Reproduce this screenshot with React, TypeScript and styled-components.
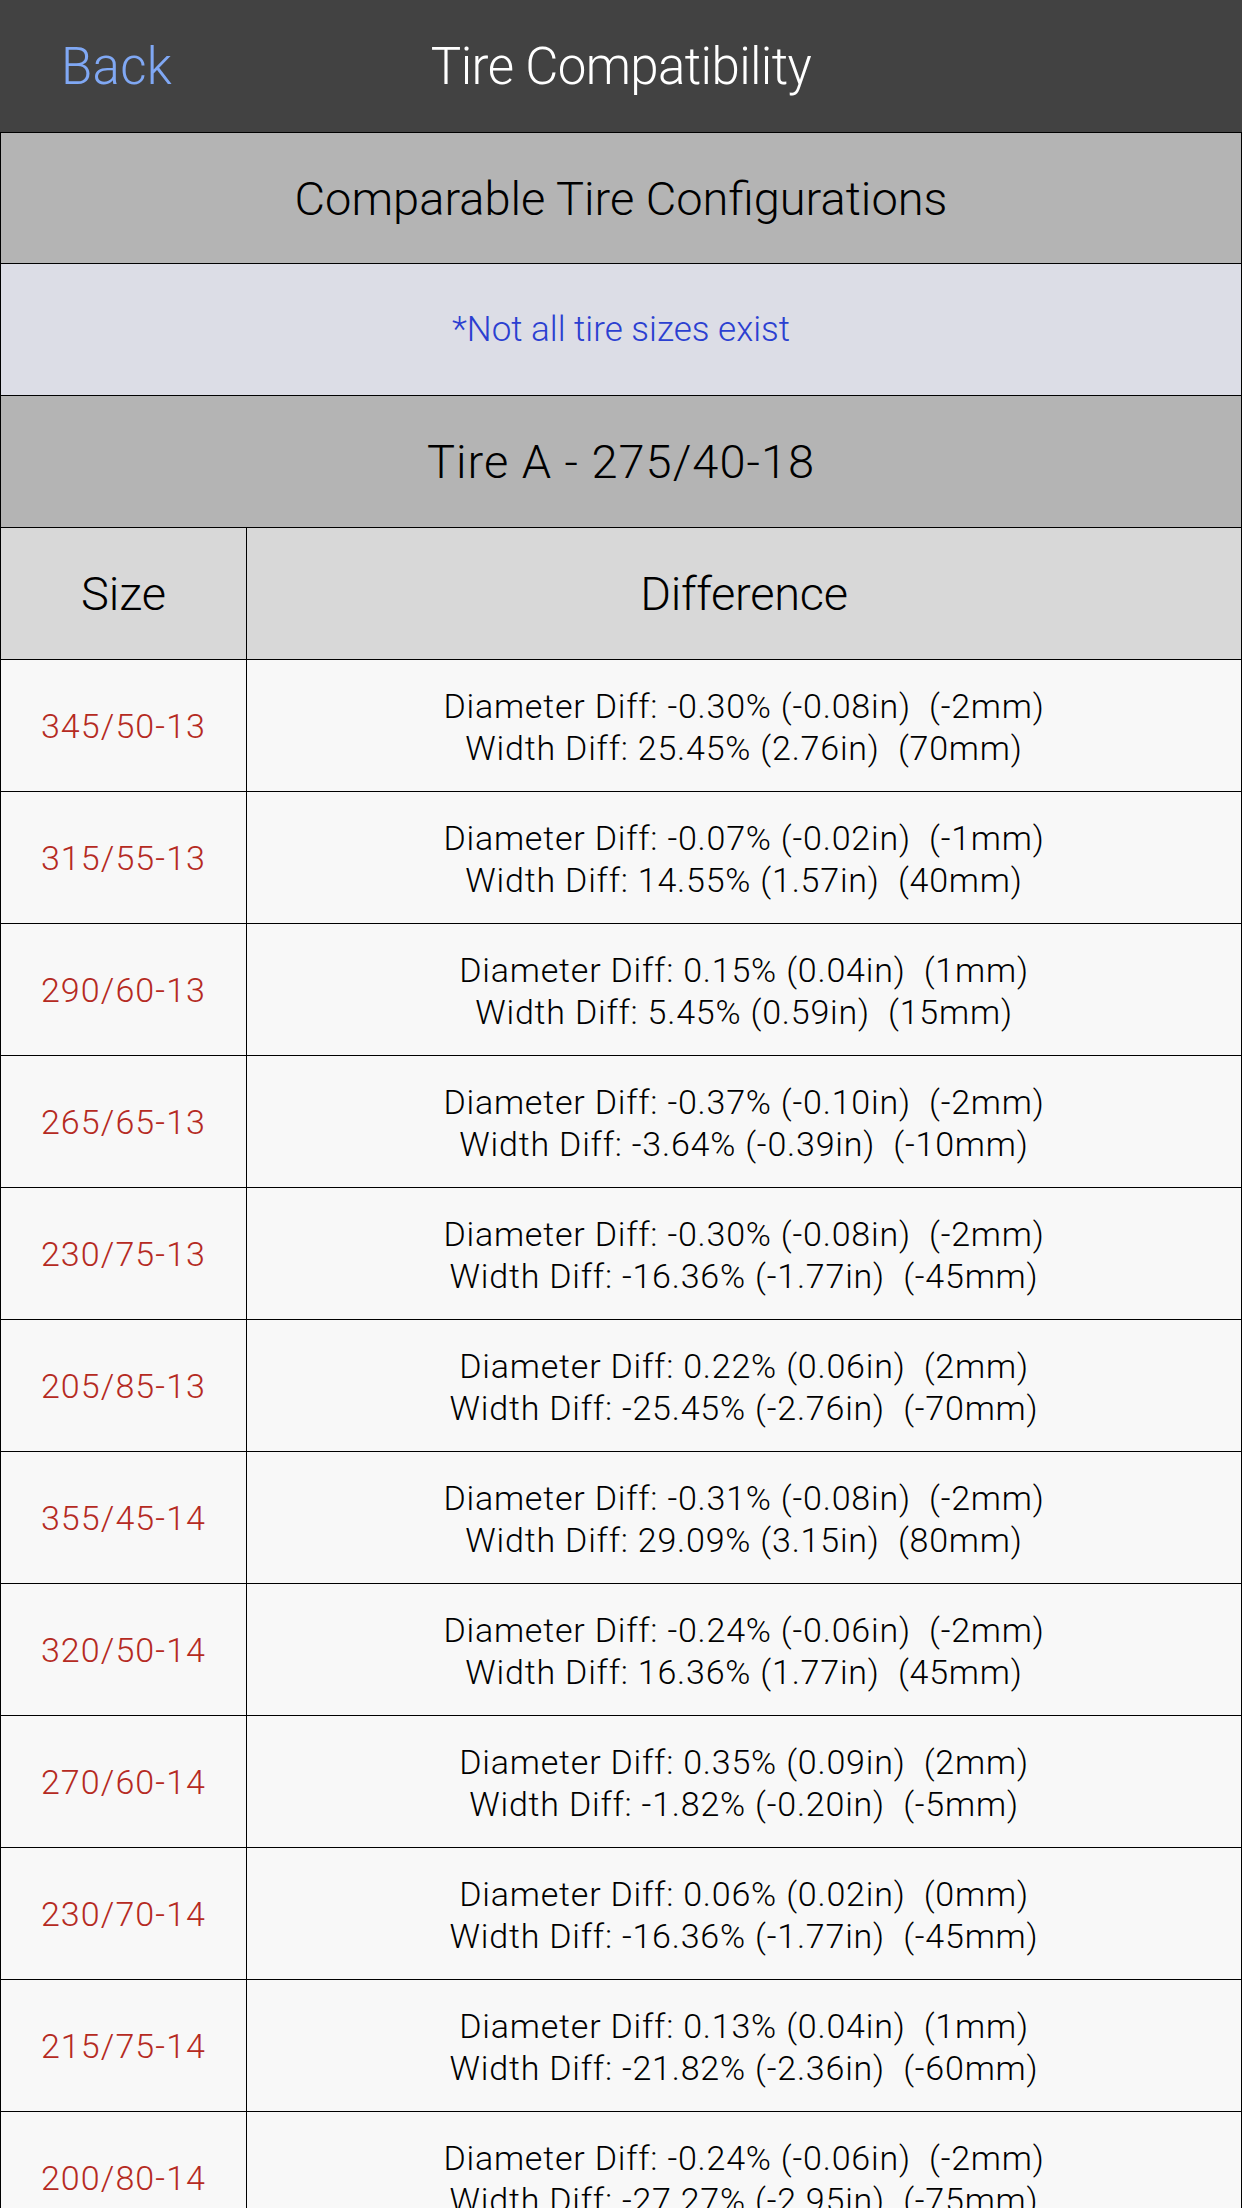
import React from "react";
import styled, { createGlobalStyle } from "styled-components";

const GlobalStyle = createGlobalStyle`
  html, body {
    margin: 0;
    padding: 0;
    background: #f8f8f8;
  }
  body {
    font-family: "Roboto", "Helvetica Neue", "Liberation Sans", Arial, sans-serif;
    font-weight: 300;
    -webkit-font-smoothing: antialiased;
  }
  * { box-sizing: border-box; }
`;

const Page = styled.div`
  width: 1242px;
  display: flex;
  flex-direction: column;
`;

const NavBar = styled.header`
  height: 132px;
  background: #424242;
  display: grid;
  grid-template-columns: 1fr auto 1fr;
  align-items: center;
`;

const BackButton = styled.span`
  justify-self: start;
  padding-left: 61px;
  font-size: 51px;
  color: #80a8f4;
  line-height: 1;
  letter-spacing: 0.3px;
`;

const NavTitle = styled.h1`
  margin: 0;
  font-size: 51px;
  font-weight: 300;
  color: #ffffff;
  line-height: 1;
  letter-spacing: -0.6px;
`;

const Banner = styled.div<{ $bg: string; $h?: number }>`
  height: ${(p) => p.$h ?? 132}px;
  background: ${(p) => p.$bg};
  border: 1px solid #000;
  border-bottom: none;
  display: flex;
  align-items: center;
  justify-content: center;
`;

const BannerTitle = styled.span<{ $spacing?: number }>`
  font-size: 47px;
  color: #000;
  line-height: 1;
  letter-spacing: ${(p) => p.$spacing ?? 0}px;
`;

const Note = styled.span`
  font-size: 35px;
  color: #2b3fd1;
  line-height: 1;
`;

const Row = styled.div<{ $head?: boolean }>`
  height: 132px;
  display: flex;
  border: 1px solid #000;
  border-bottom: none;
  background: ${(p) => (p.$head ? "#d8d8d8" : "#f8f8f8")};
`;

const SizeCell = styled.div<{ $head?: boolean }>`
  width: 246px;
  flex: none;
  border-right: 1px solid #000;
  display: flex;
  align-items: center;
  justify-content: center;
  font-size: ${(p) => (p.$head ? 47 : 34)}px;
  color: ${(p) => (p.$head ? "#000" : "#b52a22")};
  letter-spacing: ${(p) => (p.$head ? 0 : 1.1)}px;
  line-height: 1;
`;

const DiffCell = styled.div<{ $head?: boolean }>`
  flex: 1;
  display: flex;
  flex-direction: column;
  align-items: center;
  justify-content: center;
  font-size: ${(p) => (p.$head ? 47 : 34)}px;
  color: #000;
  line-height: ${(p) => (p.$head ? 1 : "42px")};
  letter-spacing: ${(p) => (p.$head ? -0.3 : 0.8)}px;
  white-space: pre;
  padding-top: ${(p) => (p.$head ? 0 : 2)}px;
`;

type Item = { size: string; d: string; w: string };

const rows: Item[] = [
  { size: "345/50-13", d: "-0.30% (-0.08in)  (-2mm)", w: "25.45% (2.76in)  (70mm)" },
  { size: "315/55-13", d: "-0.07% (-0.02in)  (-1mm)", w: "14.55% (1.57in)  (40mm)" },
  { size: "290/60-13", d: "0.15% (0.04in)  (1mm)", w: "5.45% (0.59in)  (15mm)" },
  { size: "265/65-13", d: "-0.37% (-0.10in)  (-2mm)", w: "-3.64% (-0.39in)  (-10mm)" },
  { size: "230/75-13", d: "-0.30% (-0.08in)  (-2mm)", w: "-16.36% (-1.77in)  (-45mm)" },
  { size: "205/85-13", d: "0.22% (0.06in)  (2mm)", w: "-25.45% (-2.76in)  (-70mm)" },
  { size: "355/45-14", d: "-0.31% (-0.08in)  (-2mm)", w: "29.09% (3.15in)  (80mm)" },
  { size: "320/50-14", d: "-0.24% (-0.06in)  (-2mm)", w: "16.36% (1.77in)  (45mm)" },
  { size: "270/60-14", d: "0.35% (0.09in)  (2mm)", w: "-1.82% (-0.20in)  (-5mm)" },
  { size: "230/70-14", d: "0.06% (0.02in)  (0mm)", w: "-16.36% (-1.77in)  (-45mm)" },
  { size: "215/75-14", d: "0.13% (0.04in)  (1mm)", w: "-21.82% (-2.36in)  (-60mm)" },
  { size: "200/80-14", d: "-0.24% (-0.06in)  (-2mm)", w: "-27.27% (-2.95in)  (-75mm)" },
];

export default function App() {
  return (
    <Page>
      <GlobalStyle />
      <NavBar>
        <BackButton>Back</BackButton>
        <NavTitle>Tire Compatibility</NavTitle>
        <span />
      </NavBar>
      <Banner $bg="#b4b4b4" $h={131}>
        <BannerTitle>Comparable Tire Configurations</BannerTitle>
      </Banner>
      <Banner $bg="#dcdde6">
        <Note>*Not all tire sizes exist</Note>
      </Banner>
      <Banner $bg="#b4b4b4">
        <BannerTitle $spacing={1}>Tire A - 275/40-18</BannerTitle>
      </Banner>
      <Row $head>
        <SizeCell $head>Size</SizeCell>
        <DiffCell $head>Difference</DiffCell>
      </Row>
      {rows.map((r, i) => (
        <Row key={i}>
          <SizeCell>{r.size}</SizeCell>
          <DiffCell>
            <span>{`Diameter Diff: ${r.d}`}</span>
            <span>{`Width Diff: ${r.w}`}</span>
          </DiffCell>
        </Row>
      ))}
    </Page>
  );
}
